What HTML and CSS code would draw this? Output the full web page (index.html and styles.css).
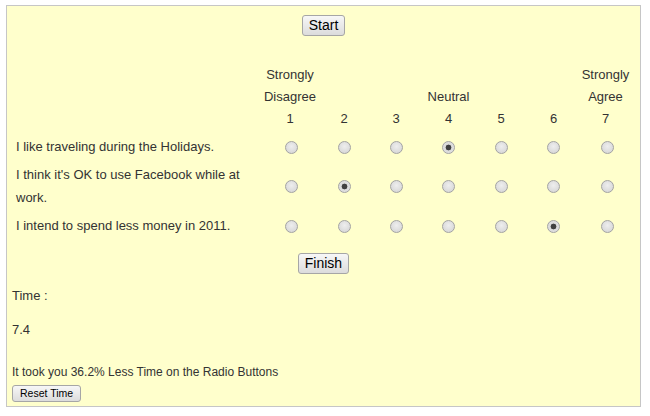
FILE: index.html
```html
<!DOCTYPE html>
<html>
<head>
<meta charset="utf-8">
<link rel="stylesheet" href="styles.css">
</head>
<body>
<div class="box">
  <div class="center start-row"><button class="btn">Start</button></div>
  <div class="survey">
    <div class="q"></div>
    <div class="hd hd-left"><span>Strongly</span><span>Disagree</span><span>1</span></div>
    <div class="hd"><span></span><span></span><span>2</span></div>
    <div class="hd"><span></span><span></span><span>3</span></div>
    <div class="hd"><span></span><span>Neutral</span><span>4</span></div>
    <div class="hd"><span></span><span></span><span>5</span></div>
    <div class="hd"><span></span><span></span><span>6</span></div>
    <div class="hd hd-right"><span>Strongly</span><span>Agree</span><span>7</span></div>

    <div class="q r1">I like traveling during the Holidays.</div>
    <div class="c r1"><input type="radio" name="a"></div>
    <div class="c r1"><input type="radio" name="a"></div>
    <div class="c r1"><input type="radio" name="a"></div>
    <div class="c r1"><input type="radio" name="a" checked></div>
    <div class="c r1"><input type="radio" name="a"></div>
    <div class="c r1"><input type="radio" name="a"></div>
    <div class="c r1"><input type="radio" name="a"></div>

    <div class="q r2">I think it's OK to use Facebook while at work.</div>
    <div class="c r2"><input type="radio" name="b"></div>
    <div class="c r2"><input type="radio" name="b" checked></div>
    <div class="c r2"><input type="radio" name="b"></div>
    <div class="c r2"><input type="radio" name="b"></div>
    <div class="c r2"><input type="radio" name="b"></div>
    <div class="c r2"><input type="radio" name="b"></div>
    <div class="c r2"><input type="radio" name="b"></div>

    <div class="q r3">I intend to spend less money in 2011.</div>
    <div class="c r3"><input type="radio" name="c"></div>
    <div class="c r3"><input type="radio" name="c"></div>
    <div class="c r3"><input type="radio" name="c"></div>
    <div class="c r3"><input type="radio" name="c"></div>
    <div class="c r3"><input type="radio" name="c"></div>
    <div class="c r3"><input type="radio" name="c" checked></div>
    <div class="c r3"><input type="radio" name="c"></div>
  </div>
  <div class="center finish-row"><button class="btn btn-finish">Finish</button></div>
  <div class="results">
    <div class="line time-label">Time :</div>
    <div class="line time-value">7.4</div>
    <div class="note">It took you 36.2% Less Time on the Radio Buttons</div>
    <button class="btn btn-small">Reset Time</button>
  </div>
</div>
</body>
</html>
```

FILE: styles.css
```css
html, body {
  margin: 0;
  padding: 0;
  background: #ffffff;
}

body {
  font-family: "Liberation Sans", Arial, sans-serif;
  font-size: 13px;
  color: #333333;
}

.box {
  margin: 5px 0 0 6px;
  width: 633px;
  height: 400px;
  border: 1px solid #c6c6c6;
  background: #ffffcc;
  display: flex;
  flex-direction: column;
}

.center {
  display: flex;
  justify-content: center;
}

.start-row {
  padding-top: 9px;
}

.btn {
  font-family: "Liberation Sans", Arial, sans-serif;
  font-size: 14px;
  color: #000000;
  height: 21px;
  padding: 0 6px;
  border: 1px solid #a6a6a6;
  border-radius: 3px;
  background: linear-gradient(#f7f7f7, #dcdcdc);
  line-height: 19px;
}

.survey {
  margin-top: 28px;
  margin-left: 9px;
  display: grid;
  grid-template-columns: 248px 54px 52px 52px 53px 52px 53px 54px;
  grid-auto-rows: auto;
}

.hd {
  display: flex;
  flex-direction: column;
  align-items: center;
  line-height: 22px;
}

.hd span {
  height: 22px;
}

.hd-left {
  margin-left: -2px;
}

.hd-right {
  margin-left: -3px;
}

.q {
  display: flex;
  align-items: center;
  line-height: 22.5px;
  padding-right: 6px;
}

.c {
  display: flex;
  align-items: center;
  justify-content: center;
}

.r1, .r3 {
  height: 34px;
}

.r2 {
  height: 45px;
}

input[type="radio"] {
  appearance: none;
  -webkit-appearance: none;
  margin: 0;
  width: 13px;
  height: 13px;
  border-radius: 50%;
  border: 1px solid #a3a3a3;
  background: radial-gradient(circle at 50% 40%, #eeeeee, #d2d2d2);
  box-sizing: border-box;
}

input[type="radio"]:checked {
  background: radial-gradient(circle, #404040 0, #404040 2.6px, #dadada 3.2px, #e6e6e6 100%);
}

.finish-row {
  margin-top: 10px;
}

.results {
  padding-left: 5px;
  display: flex;
  flex-direction: column;
  align-items: flex-start;
}

.line {
  line-height: 22px;
}

.time-label {
  margin-top: 11px;
}

.time-value {
  margin-top: 12px;
}

.note {
  margin-top: 24px;
  font-size: 12px;
  line-height: 15px;
}

.btn-small {
  margin-top: 5px;
  font-size: 10.5px;
  height: 17px;
  line-height: 15px;
  padding: 0 7px;
}
```
